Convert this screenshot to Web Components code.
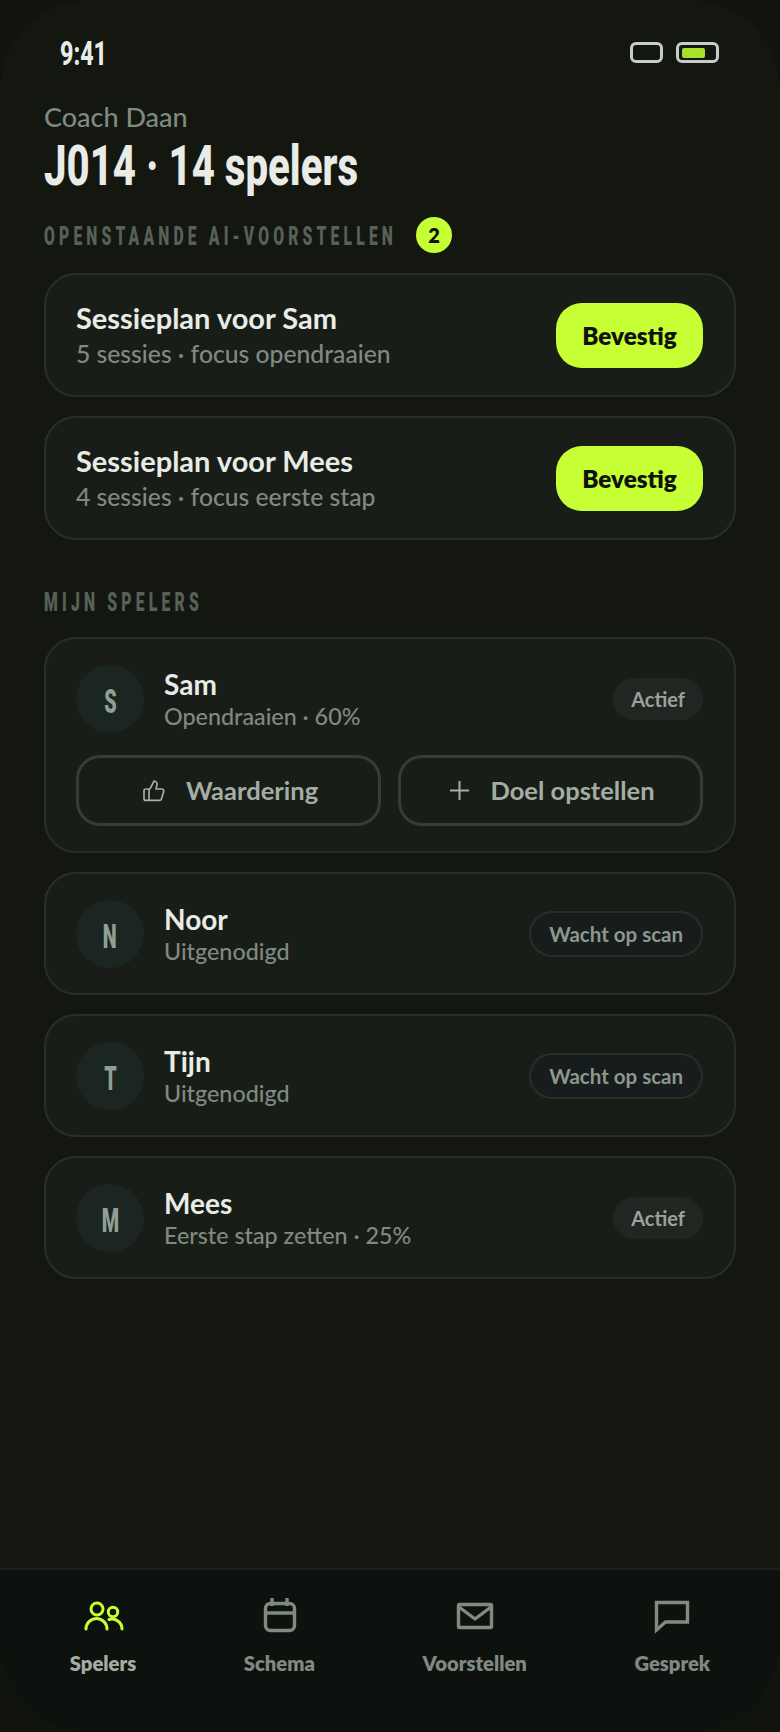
<!DOCTYPE html>
<html lang="nl"><head><meta charset="utf-8"><title>JO14</title>
<style>
html,body{margin:0;padding:0;background:#10130e}
body{width:780px;height:1732px;overflow:hidden;font-family:"Lato","Liberation Sans",sans-serif}
</style></head><body>
<coach-app>
  <status-bar slot="status"></status-bar>
  <app-header slot="header" sub="Coach Daan" title="J014 · 14 spelers"></app-header>
  <section-label badge="2" w="353">OPENSTAANDE AI-VOORSTELLEN</section-label>
  <proposal-card name="Sessieplan voor Sam" sub="5 sessies · focus opendraaien"></proposal-card>
  <proposal-card name="Sessieplan voor Mees" sub="4 sessies · focus eerste stap"></proposal-card>
  <section-label class="second" w="159">MIJN SPELERS</section-label>
  <player-card letter="S" name="Sam" sub="Opendraaien · 60%" pill="Actief" actions></player-card>
  <player-card letter="N" name="Noor" sub="Uitgenodigd" pill="Wacht op scan" outline></player-card>
  <player-card letter="T" name="Tijn" sub="Uitgenodigd" pill="Wacht op scan" outline></player-card>
  <player-card letter="M" name="Mees" sub="Eerste stap zetten · 25%" pill="Actief"></player-card>
  <bottom-nav slot="nav">
    <nav-item label="Spelers" icon="people" active></nav-item>
    <nav-item label="Schema" icon="cal"></nav-item>
    <nav-item label="Voorstellen" icon="mail"></nav-item>
    <nav-item label="Gesprek" icon="chat"></nav-item>
  </bottom-nav>
</coach-app>
<script>
const HEAD = '"Roboto","Liberation Sans",sans-serif';
const BODY = '"Lato","Liberation Sans",sans-serif';
function def(name, css, html){
  customElements.define(name, class extends HTMLElement{
    connectedCallback(){
      if(this.shadowRoot) return;
      const r=this.attachShadow({mode:'open'});
      r.innerHTML='<style>'+css+'</style>'+(typeof html==='function'?html(this):html);
    }
  });
}
const esc=s=>String(s??'');
/* condensed display text: squeezes its text horizontally to a given width */
customElements.define('cond-text',class extends HTMLElement{
  connectedCallback(){
    if(this.shadowRoot) return;
    const r=this.attachShadow({mode:'open'});
    r.innerHTML='<style>:host{display:inline-block;white-space:nowrap}span{display:inline-block;transform-origin:0 50%}</style><span><slot></slot></span>';
    const s=r.querySelector('span'),t=+this.getAttribute('w');
    const w=s.getBoundingClientRect().width;
    this.style.width=t+'px';
    s.style.transform='scaleX('+(t/w)+')';
  }
});
def('coach-app',`
  :host{display:block;width:780px;height:1732px;position:relative;overflow:hidden;background:#141710;border-radius:90px;color:#e9ece6}
  .frame{display:flex;flex-direction:column;height:100%}
  main{flex:1;display:flex;flex-direction:column;padding:0 44px}
`,`<div class="frame"><slot name="status"></slot><main><slot name="header"></slot><slot></slot></main><slot name="nav"></slot></div>`);
def('status-bar',`
  :host{display:flex;justify-content:space-between;align-items:flex-start;height:102px;padding:42px 61px 0 60px;box-sizing:border-box}
  .t{font:800 33px/23px ${HEAD};color:#e9ece6}
  .i{display:flex;gap:13px}
  .b{box-sizing:border-box;height:21px;border:3px solid #c8ccc6;border-radius:6px;display:flex;align-items:center;padding:0 3px}
  .b1{width:33px}.b2{width:43px}
  .f{width:23px;height:10px;background:#a8e02c;border-radius:2px}
`,`<span class="t"><cond-text w="47">9:41</cond-text></span><span class="i"><span class="b b1"></span><span class="b b2"><span class="f"></span></span></span>`);
def('app-header',`
  :host{display:block}
  .s{font:500 27px/30px ${BODY};color:#7f8a80}
  h1{margin:4px 0 0;height:61px;font:800 55px/60px ${HEAD};color:#e9ece6}
`,h=>`<div class="s">${esc(h.getAttribute('sub'))}</div><h1><cond-text w="314">${esc(h.getAttribute('title'))}</cond-text></h1>`);
def('section-label',`
  :host{display:flex;align-items:center;gap:19px;height:36px;margin:20px 0 20px}
  :host(.second){margin:25px 0 17px}
  .l{font:900 25px/24px ${HEAD};letter-spacing:6.6px;color:#566159;padding-top:3px}
  :host(.second) .l{padding-top:2px}
  .b{width:36px;height:36px;border-radius:50%;background:#c6ff33;color:#10130d;display:flex;align-items:center;justify-content:center;font:800 20px/1 ${BODY}}
`,h=>`<span class="l"><cond-text w="${h.getAttribute('w')}"><slot></slot></cond-text></span>${h.hasAttribute('badge')?`<span class="b">${h.getAttribute('badge')}</span>`:''}`);
def('proposal-card',`
  :host{display:flex;align-items:center;justify-content:space-between;box-sizing:border-box;height:124px;padding:0 31px 0 30px;margin-bottom:19px;background:#191d18;border:2px solid #2a2e2a;border-radius:32px}
  .w{padding-top:2px}
  .n{font:700 29px/34px ${BODY};color:#e9ece6}
  .d{margin-top:2px;font:500 24.7px/34px ${BODY};color:#7f8a80}
  button{all:unset;box-sizing:border-box;width:147px;height:65px;border-radius:26px;background:#c6ff33;color:#10130d;font:800 24.3px/65px ${BODY};text-align:center}
`,h=>`<div class="w"><div class="n">${esc(h.getAttribute('name'))}</div><div class="d">${esc(h.getAttribute('sub'))}</div></div><button>Bevestig</button>`);
const thumb='<svg width="24" height="24" viewBox="0 0 24 24" fill="none" stroke="currentColor" stroke-width="1.7" stroke-linejoin="round"><path d="M7 10v11"/><path d="M15 5.9 14 10h5.8a2 2 0 0 1 1.9 2.6l-2.3 7.4a2 2 0 0 1-1.9 1.4H4a2 2 0 0 1-2-2v-7.4a2 2 0 0 1 2-2h2.8a2 2 0 0 0 1.8-1.1L12 2a3.1 3.1 0 0 1 3 3.9Z"/></svg>';
const plus='<svg width="21" height="21" viewBox="0 0 21 21" fill="none" stroke="currentColor" stroke-width="2"><path d="M10.5 1v19M1 10.5h19"/></svg>';
def('player-card',`
  :host{display:block;box-sizing:border-box;padding:26px 31px 25px 30px;margin-bottom:19px;background:#191d18;border:2px solid #2a2e2a;border-radius:32px}
  .row{display:flex;align-items:center;height:68px}
  .a{width:68px;height:68px;border-radius:50%;background:#1b2522;color:#8f9f96;display:flex;align-items:center;justify-content:center;font:900 33px/1 ${HEAD};margin-right:20px;flex:none}
  .a span{display:inline-block;transform:translateY(1.5px) scaleX(.6)}
  .t{flex:1}
  .n{font:700 28px/34px ${BODY};color:#e9ece6}
  .d{font:500 23.3px/30px ${BODY};color:#7f8a80}
  .p{box-sizing:border-box;height:42px;padding:0 18px;border-radius:21px;background:#222622;color:#99a399;font:700 20px/42px ${BODY}}
  .p.o{height:46px;line-height:42px;background:#171c1c;border:2px solid #2a2e2a;border-radius:23px;color:#8e978e;font-size:20.5px}
  .acts{display:grid;grid-template-columns:1fr 1fr;gap:17px;margin-top:22px}
  .btn{box-sizing:border-box;height:71px;border:3px solid #363c37;border-radius:24px;padding-left:3px;display:flex;align-items:center;justify-content:center;gap:20px;color:#a4ada4;font:700 25.5px/1 ${BODY}}
`,h=>`<div class="row"><span class="a"><span>${esc(h.getAttribute('letter'))}</span></span><div class="t"><div class="n">${esc(h.getAttribute('name'))}</div><div class="d">${esc(h.getAttribute('sub'))}</div></div><span class="p ${h.hasAttribute('outline')?'o':''}">${esc(h.getAttribute('pill'))}</span></div>${h.hasAttribute('actions')?`<div class="acts"><div class="btn">${thumb}<span>Waardering</span></div><div class="btn">${plus}<span>Doel opstellen</span></div></div>`:''}`);
const ICONS={
  people:'<circle cx="18" cy="13" r="6"/><path d="M7 33a10.5 10.5 0 0 1 21 0"/><circle cx="34" cy="16" r="4.7"/><path d="M30 23.5a10 10 0 0 1 13 9.5"/>',
  cal:'<g stroke-width="3.4" transform="translate(1 0)"><rect x="9.5" y="7.5" width="29" height="27" rx="5"/><path d="M9.5 17h29M16 2v8M31 2v8" stroke-linecap="butt"/></g>',
  mail:'<g stroke-width="3.4"><rect x="7.5" y="8.5" width="33" height="23" rx="1"/><path d="M8 11l16 12 16-12"/></g>',
  chat:'<path d="M8.5 6.5H39.5V26H17.5L8.5 34Z" stroke-width="3.4" stroke-linejoin="miter"/>'
};
def('nav-item',`
  :host{display:flex;flex-direction:column;align-items:center;color:#7f8a80}
  :host([active]){color:#c6ff33}
  svg{display:block}
  span{margin-top:13px;font:800 20.2px/28px ${BODY};color:#7f8a80}
  :host([active]) span{color:#a4ada4}
`,h=>`<svg width="48" height="40" viewBox="0 0 48 40" fill="none" stroke="currentColor" stroke-width="3" stroke-linecap="round" stroke-linejoin="round">${ICONS[h.getAttribute('icon')]}</svg><span>${esc(h.getAttribute('label'))}</span>`);
def('bottom-nav',`
  :host{display:flex;justify-content:space-around;box-sizing:border-box;height:164px;padding:26px 16px 0;background:#0e120e;border-top:2px solid #1d201c}
`,`<slot></slot>`);
</script>
</body></html>
